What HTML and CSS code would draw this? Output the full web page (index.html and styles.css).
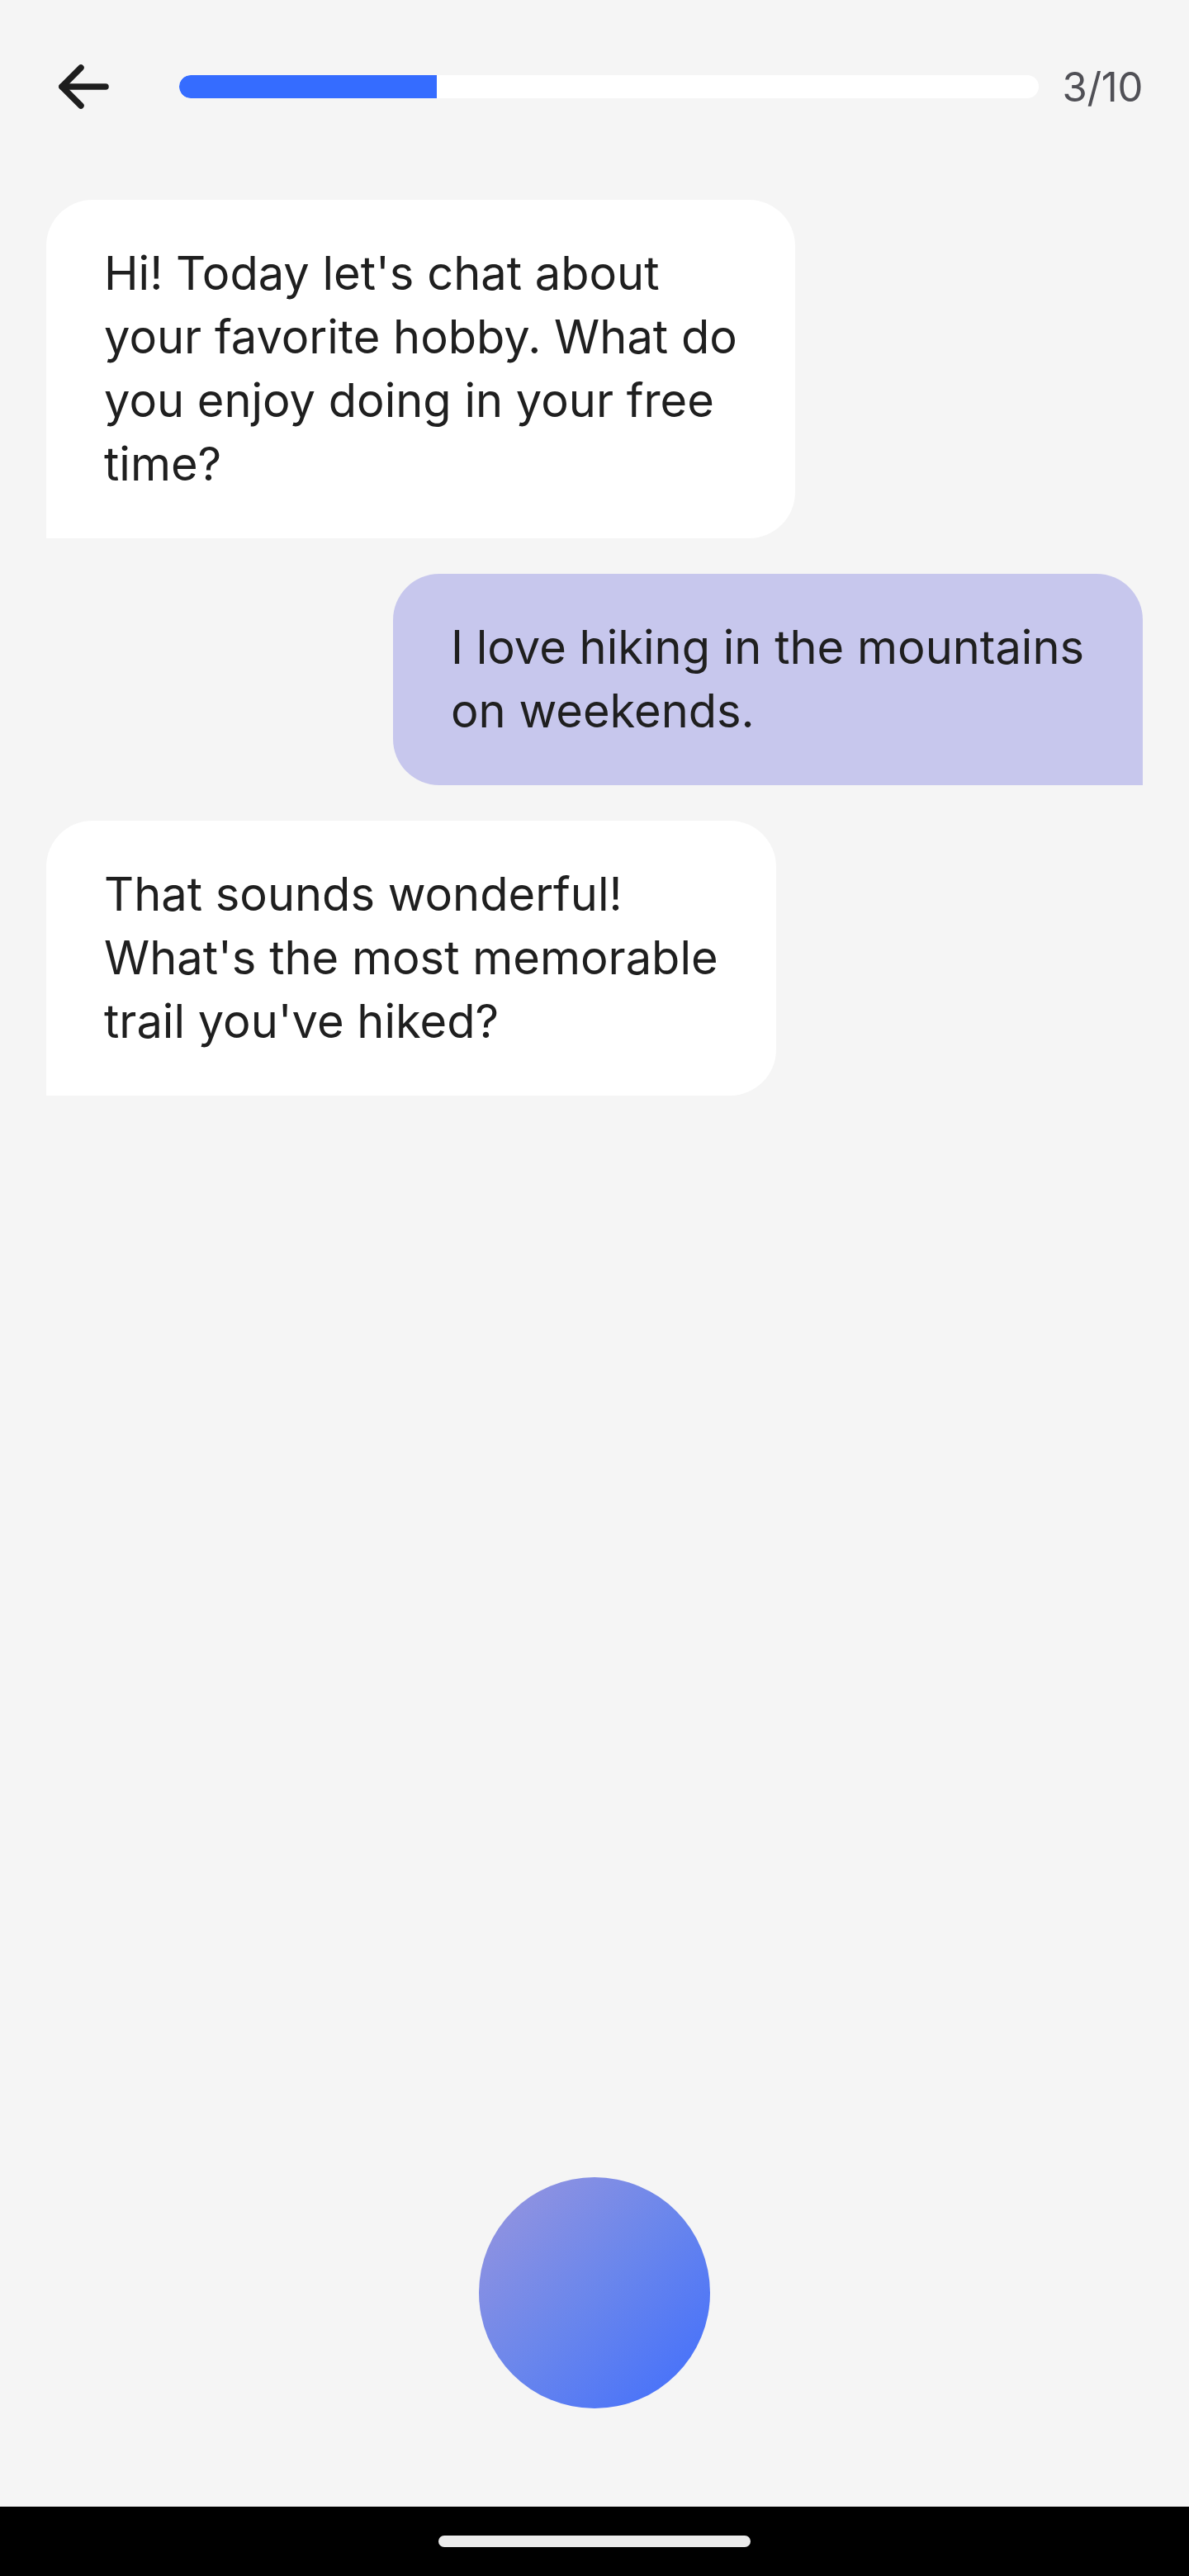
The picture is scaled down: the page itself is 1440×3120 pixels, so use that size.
FILE: index.html
```html
<!DOCTYPE html>
<html lang="en">
<head>
<meta charset="utf-8">
<title>Chat</title>
<link rel="stylesheet" href="styles.css">
</head>
<body>
<div class="screen">
  <header class="topbar">
    <button class="back" aria-label="Back">
      <svg width="84" height="84" viewBox="0 0 84 84" fill="none" stroke="#1e1e1e" stroke-width="7.5" stroke-linecap="round" stroke-linejoin="round">
        <path d="M42 19 L19 42 L42 65"/>
        <path d="M19 42 H72"/>
      </svg>
    </button>
    <div class="progress"><div class="progress-fill" style="width:30%"></div></div>
    <span class="counter">3/10</span>
  </header>

  <main class="chat">
    <div class="bubble bot"><span class="bubble-text">Hi! Today let's chat about your favorite hobby. What do you enjoy doing in your free time?</span></div>
    <div class="bubble user"><span class="bubble-text">I love hiking in the mountains on weekends.</span></div>
    <div class="bubble bot"><span class="bubble-text">That sounds wonderful! What's the most memorable trail you've hiked?</span></div>
  </main>

  <div class="mic-area">
    <button class="mic" aria-label="Record"></button>
  </div>

  <nav class="navbar"><span class="home-indicator"></span></nav>
</div>
<script src="script.js"></script>
</body>
</html>
```
FILE: styles.css
```css
* { box-sizing: border-box; }
html, body {
  margin: 0;
  padding: 0;
  background: #f5f5f5;
}
body {
  font-family: Inter, "Noto Sans", sans-serif;
  color: #1f1f1f;
}
.screen {
  width: 1440px;
  height: 3120px;
  display: flex;
  flex-direction: column;
  background: #f5f5f5;
}
.topbar {
  display: flex;
  align-items: center;
  height: 84px;
  margin-top: 63px;
  padding: 0 56px;
}
.back {
  width: 84px;
  height: 84px;
  padding: 0;
  border: 0;
  background: none;
  display: block;
  flex: none;
}
.back svg { display: block; }
.progress {
  flex: 1;
  height: 28px;
  margin-left: 77px;
  background: #ffffff;
  border-radius: 14px;
  overflow: hidden;
}
.progress-fill {
  height: 100%;
  background: #356cff;
  border-radius: 14px 0 0 14px;
}
.counter {
  margin-left: 28px;
  font-size: 49px;
  line-height: 1;
  color: #505056;
  letter-spacing: -0.3px;
}
.chat {
  flex: 1;
  display: flex;
  flex-direction: column;
  gap: 43px;
  padding: 95px 56px 0;
}
.bubble {
  max-width: 930px;
  width: fit-content;
  padding: 51px 70px;
  font-size: 56px;
  line-height: 77px;
  color: #1f1f1f;
}
.bubble.bot {
  background: #ffffff;
  border-radius: 56px 56px 56px 0;
  align-self: flex-start;
}
.bubble.user {
  background: #c7c7ed;
  border-radius: 56px 56px 0 56px;
  align-self: flex-end;
}
.mic-area {
  display: flex;
  justify-content: center;
  padding-bottom: 119px;
}
.mic {
  width: 280px;
  height: 280px;
  border: 0;
  padding: 0;
  border-radius: 50%;
  background: linear-gradient(135deg, #9a96dd 0%, #6a86ec 50%, #3f6dfd 100%);
}
.navbar {
  height: 84px;
  background: #000;
  display: flex;
  justify-content: center;
  align-items: center;
}
.home-indicator {
  width: 378px;
  height: 14px;
  border-radius: 7px;
  background: #ebebeb;
}
```
FILE: script.js
```js
(function () {
  function shrink() {
    document.querySelectorAll('.bubble').forEach(function (b) {
      var t = b.querySelector('.bubble-text');
      var range = document.createRange();
      range.selectNodeContents(t);
      var rects = range.getClientRects();
      var maxW = 0;
      for (var i = 0; i < rects.length; i++) {
        if (rects[i].width > maxW) maxW = rects[i].width;
      }
      var cs = getComputedStyle(b);
      var pad = parseFloat(cs.paddingLeft) + parseFloat(cs.paddingRight);
      b.style.width = Math.ceil(maxW + pad) + 'px';
    });
  }
  if (document.fonts && document.fonts.ready) {
    document.fonts.ready.then(shrink);
  } else {
    shrink();
  }
})();
```
